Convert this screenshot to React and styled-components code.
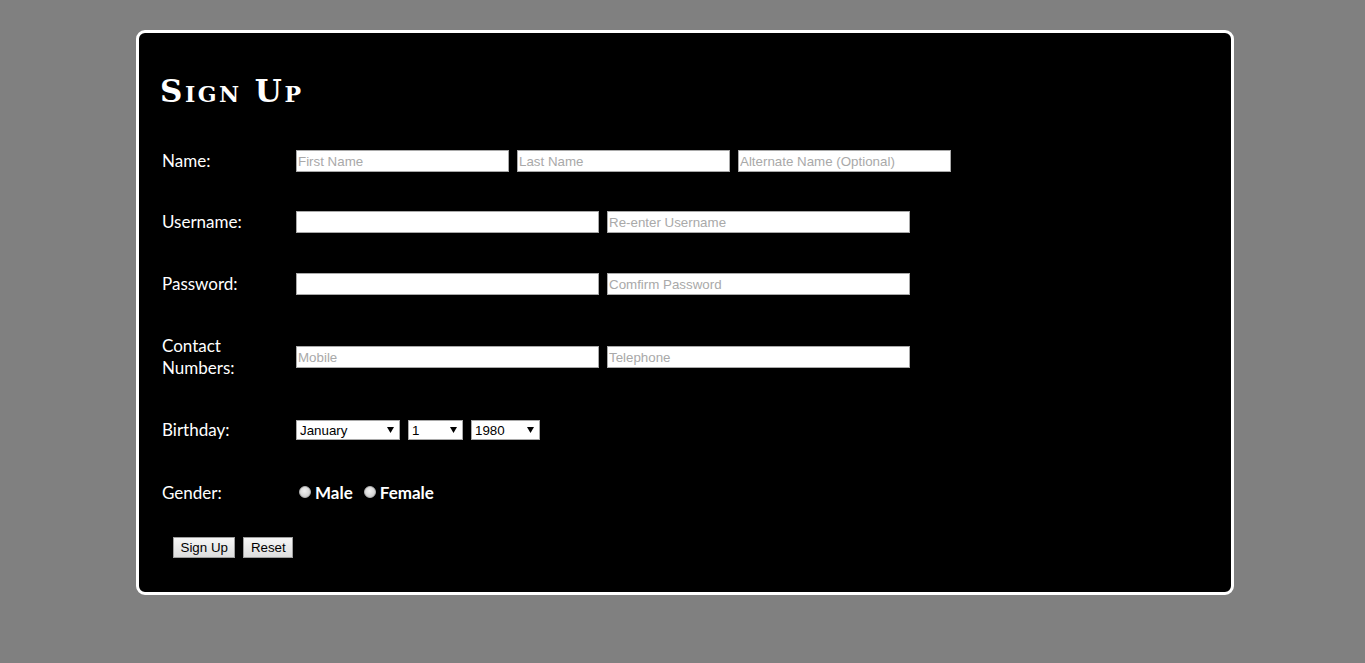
import React from "react"
import styled, { createGlobalStyle } from "styled-components"

const GlobalStyle = createGlobalStyle`
  html, body {
    margin: 0;
    padding: 0;
    background: #808080;
  }

  body {
    font-family: "Liberation Sans", Arial, sans-serif;
  }
`

const Card = styled.div`
  box-sizing: border-box;
  width: 1098px;
  margin: 30px 0 0 136px;
  padding: 0 21px 34px 21px;
  background: #000;
  border: 3px solid #fff;
  border-radius: 9px;
  color: #fff;
`

const Title = styled.h1`
  margin: 0;
  padding: 40px 0 41px 0;
  font-family: "DejaVu Serif", "Liberation Serif", serif;
  font-variant: small-caps;
  font-weight: bold;
  font-size: 31px;
  line-height: 36px;
  letter-spacing: 2.5px;
`

const Rows = styled.div`
  display: flex;
  flex-direction: column;
  gap: 39px;
`

const Row = styled.div`
  display: grid;
  grid-template-columns: 136px 1fr;
  align-items: center;
  margin-top: ${(p) => p.$nudge || 0}px;
`

const Label = styled.div`
  padding-left: 2px;
  font-family: Lato, "Open Sans", sans-serif;
  font-size: 17px;
  line-height: 22px;
  width: ${(p) => p.$width || "auto"};
`

const Fields = styled.div`
  display: flex;
  align-items: center;
  gap: 8px;
`

const Input = styled.input`
  box-sizing: border-box;
  width: ${(p) => p.$width}px;
  height: 22px;
  margin: 0;
  padding: 0 1px;
  border: 1px solid #a9a9a9;
  background: #fff;
  font-family: "Liberation Sans", Arial, sans-serif;
  font-size: 13.33px;
  color: #000;
  outline: none;

  &::placeholder {
    color: #a9a9a9;
  }
`

const SelectWrap = styled.span`
  position: relative;
  display: inline-block;
  width: ${(p) => p.$width}px;
  height: 20px;

  svg {
    position: absolute;
    right: 6px;
    top: 7px;
    pointer-events: none;
  }
`

const Select = styled.select`
  appearance: none;
  box-sizing: border-box;
  width: 100%;
  height: 20px;
  margin: 0;
  padding: 0 3px;
  border: 1px solid #a9a9a9;
  border-radius: 0;
  background: #fff;
  color: #000;
  font-family: "Liberation Sans", Arial, sans-serif;
  font-size: 13.33px;
  outline: none;
`

const Choice = styled.label`
  display: inline-flex;
  align-items: center;
  gap: 4px;
  font-family: Lato, "Open Sans", sans-serif;
  font-weight: bold;
  font-size: 17px;
  line-height: 22px;
`

const Radio = styled.input.attrs({ type: "radio" })`
  appearance: none;
  box-sizing: border-box;
  width: 12px;
  height: 12px;
  margin: 0 0 0 3px;
  border-radius: 50%;
  border: 1px solid #b5b5b5;
  background: radial-gradient(circle at 45% 40%, #f2f2f2 0%, #d9d9d9 55%, #bdbdbd 100%);
  position: relative;
  top: -1px;
`

const Actions = styled.div`
  display: flex;
  gap: 8px;
  margin: 33px 0 0 13px;
`

const Button = styled.button`
  box-sizing: border-box;
  height: 21px;
  padding: 0 6.5px;
  border: 1px solid #9e9e9e;
  background: linear-gradient(#f6f6f6, #dddddd);
  color: #000;
  font-family: "Liberation Sans", Arial, sans-serif;
  font-size: 13.33px;
  line-height: 19px;
`

function Caret() {
  return (
    <svg width="7" height="6" viewBox="0 0 7 6">
      <path d="M0 0 H7 L3.5 6 Z" fill="#000" />
    </svg>
  )
}

function Dropdown({ width, value, options }) {
  return (
    <SelectWrap $width={width}>
      <Select defaultValue={value}>
        {options.map((o) => (
          <option key={o}>{o}</option>
        ))}
      </Select>
      <Caret />
    </SelectWrap>
  )
}

const months = [
  "January", "February", "March", "April", "May", "June",
  "July", "August", "September", "October", "November", "December",
]
const days = Array.from({ length: 31 }, (_, i) => String(i + 1))
const years = Array.from({ length: 40 }, (_, i) => String(1980 + i))

export default function App() {
  return (
    <>
      <GlobalStyle />
      <Card>
        <Title>Sign Up</Title>
        <form onSubmit={(e) => e.preventDefault()}>
          <Rows>
            <Row>
              <Label>Name:</Label>
              <Fields>
                <Input $width={213} placeholder="First Name" />
                <Input $width={213} placeholder="Last Name" />
                <Input $width={213} placeholder="Alternate Name (Optional)" />
              </Fields>
            </Row>
            <Row>
              <Label>Username:</Label>
              <Fields>
                <Input $width={303} />
                <Input $width={303} placeholder="Re-enter Username" />
              </Fields>
            </Row>
            <Row $nudge={1}>
              <Label>Password:</Label>
              <Fields>
                <Input $width={303} type="password" />
                <Input $width={303} type="password" placeholder="Comfirm Password" />
              </Fields>
            </Row>
            <Row $nudge={1}>
              <Label $width="90px">Contact Numbers:</Label>
              <Fields>
                <Input $width={303} placeholder="Mobile" />
                <Input $width={303} placeholder="Telephone" />
              </Fields>
            </Row>
            <Row $nudge={1}>
              <Label>Birthday:</Label>
              <Fields>
                <Dropdown width={104} value="January" options={months} />
                <Dropdown width={55} value="1" options={days} />
                <Dropdown width={69} value="1980" options={years} />
              </Fields>
            </Row>
            <Row $nudge={2}>
              <Label>Gender:</Label>
              <Fields>
                <Choice>
                  <Radio name="gender" value="male" />
                  Male
                </Choice>
                <Choice>
                  <Radio name="gender" value="female" />
                  Female
                </Choice>
              </Fields>
            </Row>
          </Rows>
          <Actions>
            <Button type="submit">Sign Up</Button>
            <Button type="reset">Reset</Button>
          </Actions>
        </form>
      </Card>
    </>
  )
}
